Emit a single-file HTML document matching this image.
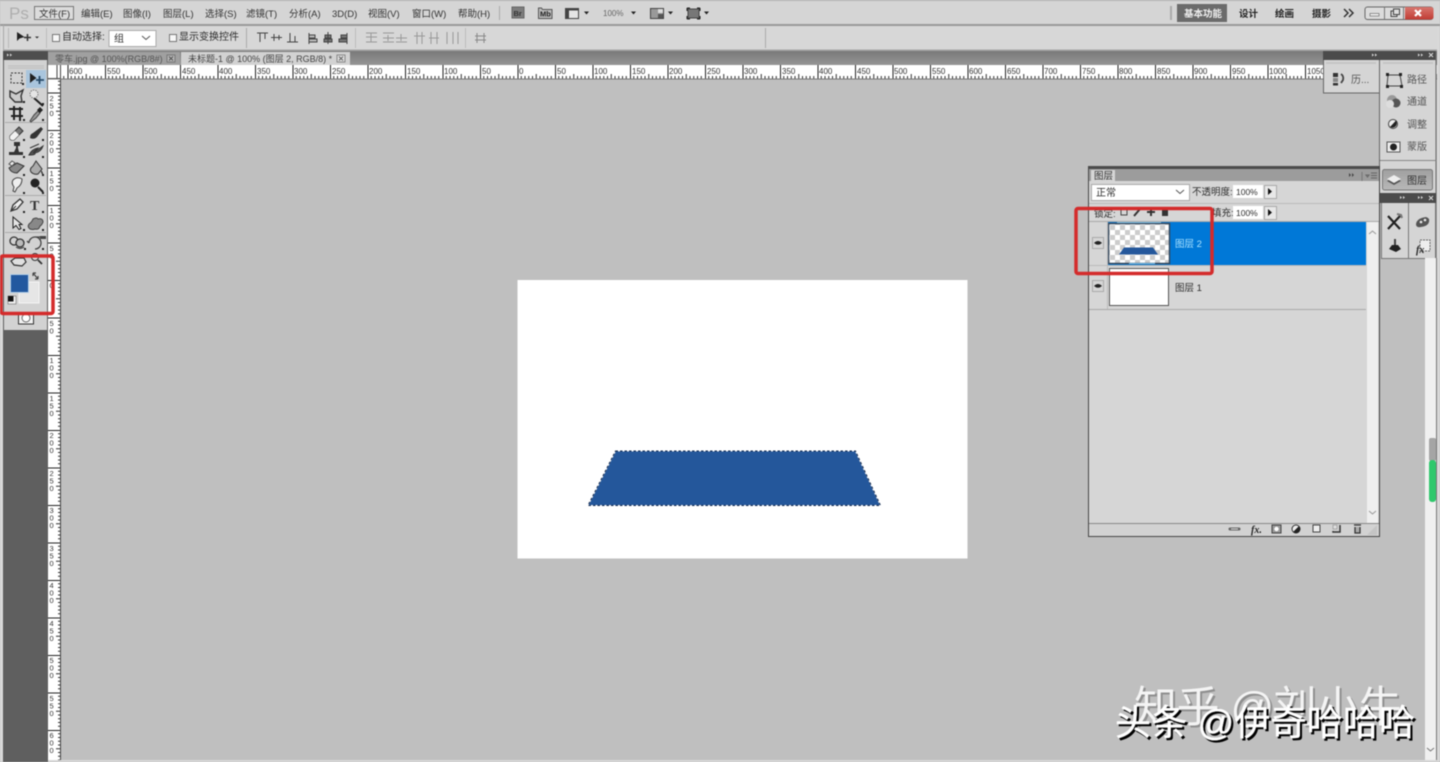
<!DOCTYPE html>
<html lang="zh"><head><meta charset="utf-8"><title>Photoshop</title>
<style>
html,body{margin:0;padding:0;width:1440px;height:762px;overflow:hidden;background:#bfbfbf}
svg{display:block;position:absolute;left:0;top:0;filter:blur(.5px)}
text{font-family:"Liberation Sans","Noto Sans CJK SC",sans-serif;fill:#2e2e2e;font-size:10px}
.m text{font-size:9.5px;fill:#333}
.rh text{font-size:8px;fill:#333}
.rv text{font-size:7.5px;fill:#333}
</style></head><body>
<svg width="1440" height="762" viewBox="0 0 1440 762" xmlns="http://www.w3.org/2000/svg">
<defs>
<pattern id="th" patternUnits="userSpaceOnUse" x="517.5" y="65" width="37.5" height="14">
<rect width="37.5" height="14" fill="#fff"/>
<rect x="0" width="1" height="14" fill="#222"/>
<path d="M3.75 11v3M7.5 11v3M11.25 11v3M15 11v3M18.75 9v5M22.5 11v3M26.25 11v3M30 11v3M33.75 11v3" stroke="#333" stroke-width="1"/>
</pattern>
<pattern id="tv" patternUnits="userSpaceOnUse" x="48" y="280" width="13" height="37.5">
<rect width="13" height="37.5" fill="#fff"/>
<rect y="0" width="13" height="1" fill="#222"/>
<path d="M10 3.75h3M10 7.5h3M10 11.25h3M10 15h3M8 18.75h5M10 22.5h3M10 26.25h3M10 30h3M10 33.75h3" stroke="#333" stroke-width="1"/>
</pattern>
<pattern id="ck" patternUnits="userSpaceOnUse" x="1110" y="225" width="10" height="10">
<rect width="10" height="10" fill="#fff"/><rect width="5" height="5" fill="#ccc"/><rect x="5" y="5" width="5" height="5" fill="#ccc"/>
</pattern>
<linearGradient id="tb" x1="0" y1="0" x2="0" y2="1"><stop offset="0" stop-color="#7a7a7a"/><stop offset="1" stop-color="#959595"/></linearGradient>
<linearGradient id="cl" x1="0" y1="0" x2="0" y2="1"><stop offset="0" stop-color="#d8766e"/><stop offset="1" stop-color="#c03c34"/></linearGradient>
<linearGradient id="btn" x1="0" y1="0" x2="0" y2="1"><stop offset="0" stop-color="#a0a0a0"/><stop offset="1" stop-color="#b8b8b8"/></linearGradient>
</defs>

<!-- base -->
<rect width="1440" height="762" fill="#bfbfbf"/>
<rect x="0" y="0" width="1440" height="25" fill="#d5d5d5"/>
<rect x="0" y="0" width="1440" height="1" fill="#b5b5b5"/>
<rect x="0" y="24" width="1440" height="2" fill="#999"/>
<rect x="0" y="26" width="1440" height="24" fill="#d7d7d7"/>
<rect x="0" y="49.500" width="1440" height="2" fill="#a3a3a3"/>
<rect x="0" y="26" width="3" height="736" fill="#d9d9d9"/>
<rect x="3" y="25" width="1" height="26" fill="#a8a8a8"/>

<!-- menu -->
<text x="9" y="19" style="font-size:17px;fill:#aeaeae;font-family:'Liberation Sans',sans-serif">Ps</text>
<rect x="34.500" y="6.500" width="39" height="13" fill="#dcdcdc" stroke="#777"/>
<g class="m">
<text x="39" y="17">文件(F)</text>
<text x="81" y="17">编辑(E)</text>
<text x="123" y="17">图像(I)</text>
<text x="163" y="17">图层(L)</text>
<text x="205" y="17">选择(S)</text>
<text x="246" y="17">滤镜(T)</text>
<text x="289" y="17">分析(A)</text>
<text x="332" y="17">3D(D)</text>
<text x="368" y="17">视图(V)</text>
<text x="412" y="17">窗口(W)</text>
<text x="458" y="17">帮助(H)</text>
</g>
<rect x="499" y="6" width="1" height="14" fill="#aaa"/>
<rect x="512" y="7" width="12" height="11" fill="#7d7d7d" stroke="#666"/>
<text x="513.500" y="16" style="font-size:7.500px;font-weight:bold;fill:#333">Br</text>
<path d="M538.500 8h3l1 1.500h9.500v9h-13.500z" fill="#bbb" stroke="#555"/>
<text x="540" y="16.500" style="font-size:7.500px;font-weight:bold;fill:#222">Mb</text>
<rect x="565.500" y="8.500" width="13" height="10" fill="#e5e5e5" stroke="#444"/>
<rect x="565" y="8" width="4" height="11" fill="#444"/><rect x="565" y="8" width="14" height="2.500" fill="#444"/>
<path d="M584 11.500h5l-2.500 3z" fill="#222"/>
<text x="603" y="16" style="font-size:8px;fill:#666">100%</text>
<path d="M631 11.500h5l-2.500 3z" fill="#222"/>
<rect x="650.500" y="8.500" width="13" height="10" fill="#999" stroke="#444"/>
<rect x="658" y="9" width="5" height="4" fill="#ddd"/><rect x="658" y="14" width="5" height="4" fill="#555"/>
<path d="M668 11.500h5l-2.500 3z" fill="#222"/>
<rect x="688" y="9" width="11" height="9" fill="#777" stroke="#444"/>
<path d="M687 8h3M687 8v3M700 8h-3M700 8v3M687 19h3M687 19v-3M700 19h-3M700 19v-3" stroke="#222" fill="none"/>
<path d="M704 11.500h5l-2.500 3z" fill="#222"/>

<!-- workspace switcher -->
<rect x="1170" y="6" width="2" height="14" fill="#aaa"/>
<rect x="1177" y="4" width="50" height="18" fill="#6b6b6b"/>
<text x="1184" y="17" style="fill:#f0f0f0;font-weight:bold;font-size:9.500px">基本功能</text>
<text x="1239" y="17" style="fill:#222;font-weight:bold;font-size:9.500px">设计</text>
<text x="1275" y="17" style="fill:#222;font-weight:bold;font-size:9.500px">绘画</text>
<text x="1312" y="17" style="fill:#222;font-weight:bold;font-size:9.500px">摄影</text>
<path d="M1344 9l4 4-4 4M1349 9l4 4-4 4" stroke="#333" stroke-width="1.500" fill="none"/>
<rect x="1365" y="7" width="68" height="12.500" rx="2.500" fill="#dcdcdc" stroke="#666"/>
<path d="M1405 7h26a2.500 2.500 0 0 1 2.500 2.500v7.500a2.500 2.500 0 0 1-2.500 2.500h-26z" fill="url(#cl)"/>
<rect x="1384" y="7" width="1" height="12.500" fill="#777"/><rect x="1403" y="7" width="1" height="12.500" fill="#777"/>
<rect x="1370" y="13.500" width="9" height="2.500" fill="#f3f3f3" stroke="#555" stroke-width=".6"/>
<rect x="1391" y="11" width="6" height="5.500" fill="none" stroke="#444"/><rect x="1393.500" y="9" width="6" height="5.500" fill="#ddd" stroke="#444"/>
<path d="M1415 10l6 6M1421 10l-6 6" stroke="#fff" stroke-width="2.200"/>

<!-- options bar -->
<rect x="8" y="28" width="1" height="20" fill="#b8b8b8"/>
<path d="M17 32v9l2.500-2.500 5-1.500z" fill="#222"/>
<path d="M27.500 34v7M24 37.500h7" stroke="#333" stroke-width="1.500"/>
<path d="M35 36.500h4l-2 2z" fill="#333"/>
<rect x="46" y="28" width="1" height="20" fill="#bbb"/>
<rect x="52.500" y="34.500" width="7" height="7" fill="#f7f7f7" stroke="#777"/>
<text x="62" y="40">自动选择:</text>
<rect x="109" y="30.500" width="47" height="16" fill="#fff" stroke="#aaa"/>
<text x="114" y="42">组</text>
<path d="M142 36l4 3.500 4-3.500" stroke="#555" fill="none"/>
<rect x="169.500" y="34.500" width="7" height="7" fill="#f7f7f7" stroke="#777"/>
<text x="179" y="40">显示变换控件</text>
<rect x="246" y="28" width="1" height="20" fill="#aaa"/>
<g stroke="#444" fill="#666" stroke-width="1">
<path d="M257 33h11M260 33v9M265 33v6" fill="none"/>
<path d="M271 37.500h11M274 34v7M279 35v5" fill="none"/>
<path d="M287 42h11M290 33v9M295 36v6" fill="none"/>
<path d="M309 33v11M309 35h6v3h-6zM309 39h8v3h-8z" fill="#bbb"/>
<path d="M328 32v12M325 35h6v3h-6zM324 39h8v3h-8z" fill="#777"/>
<path d="M347 33v11M341 35h6v3h-6zM339 39h8v3h-8z" fill="#777"/>
</g>
<rect x="355" y="28" width="1" height="20" fill="#bbb"/>
<g stroke="#999" fill="none" stroke-width="1">
<path d="M366 33h11M366 37h11M366 42h11M371 33v9"/>
<path d="M383 33h11M383 38h11M383 42h11M388 35v6"/>
<path d="M396 42h11M396 38h11M401 34v7"/>
<path d="M417 32v12M422 32v12M414 36h11"/>
<path d="M431 32v12M437 32v12M429 38h10"/>
<path d="M447 32v12M453 32v12M458 32v12"/>
</g>
<rect x="465" y="28" width="1" height="20" fill="#bbb"/>
<path d="M477 33v10M484 33v10M475 36h11M475 40h11" stroke="#888" fill="none"/>
<rect x="765" y="28" width="1" height="20" fill="#aaa"/>

<!-- tabs -->
<rect x="3" y="51" width="1437" height="14" fill="url(#tb)"/>
<rect x="3" y="51" width="45" height="9" fill="#4e4e4e"/>
<path d="M7 53.500v3l2-1.500zM10 53.500v3l2-1.500z" fill="#ddd"/>
<rect x="48" y="52" width="132" height="13" fill="#a0a0a0"/>
<text x="55" y="62" style="fill:#555;font-size:9px">零车.jpg @ 100%(RGB/8#)</text>
<rect x="167" y="55" width="8" height="7" fill="#b5b5b5" stroke="#777"/>
<path d="M169 56.500l4 4M173 56.500l-4 4" stroke="#555"/>
<rect x="181" y="52" width="169" height="13" fill="#d2d2d2"/>
<text x="188" y="62" style="fill:#444;font-size:9px">未标题-1 @ 100% (图层 2, RGB/8) *</text>
<rect x="337" y="55" width="8" height="7" fill="#ddd" stroke="#888"/>
<path d="M339 56.500l4 4M343 56.500l-4 4" stroke="#666"/>

<!-- rulers -->
<rect x="48" y="65" width="1392" height="14" fill="url(#th)"/>
<rect x="48" y="79" width="13" height="683" fill="url(#tv)"/>
<rect x="48" y="65" width="13" height="14" fill="#fff"/>
<path d="M60.500 65v697M48 78.500h13M57 65v14" stroke="#444" fill="none"/>
<rect x="48" y="78.500" width="1392" height="1" fill="#777"/>
<g class="rh">
<text x="69" y="74">600</text><text x="107" y="74">550</text><text x="144" y="74">500</text><text x="182" y="74">450</text><text x="219" y="74">400</text><text x="257" y="74">350</text><text x="294" y="74">300</text><text x="332" y="74">250</text><text x="369" y="74">200</text><text x="407" y="74">150</text><text x="444" y="74">100</text><text x="482" y="74">50</text><text x="519" y="74">0</text><text x="557" y="74">50</text><text x="594" y="74">100</text><text x="632" y="74">150</text><text x="669" y="74">200</text><text x="707" y="74">250</text><text x="744" y="74">300</text><text x="782" y="74">350</text><text x="819" y="74">400</text><text x="857" y="74">450</text><text x="894" y="74">500</text><text x="932" y="74">550</text><text x="969" y="74">600</text><text x="1007" y="74">650</text><text x="1044" y="74">700</text><text x="1082" y="74">750</text><text x="1119" y="74">800</text><text x="1157" y="74">850</text><text x="1194" y="74">900</text><text x="1232" y="74">950</text><text x="1269" y="74">1000</text><text x="1307" y="74">1050</text>
</g>
<g class="rv">
<text x="49.500 49.500 49.500" y="101 108.500 116">250</text>
<text x="49.500 49.500 49.500" y="138 145.500 153">200</text>
<text x="49.500 49.500 49.500" y="176 183.500 191">150</text>
<text x="49.500 49.500 49.500" y="213 220.500 228">100</text>
<text x="49.500 49.500" y="251 258.500">50</text>
<text x="49.500" y="288">0</text>
<text x="49.500 49.500" y="326 333.500">50</text>
<text x="49.500 49.500 49.500" y="363 370.500 378">100</text>
<text x="49.500 49.500 49.500" y="401 408.500 416">150</text>
<text x="49.500 49.500 49.500" y="438 445.500 453">200</text>
<text x="49.500 49.500 49.500" y="476 483.500 491">250</text>
<text x="49.500 49.500 49.500" y="513 520.500 528">300</text>
<text x="49.500 49.500 49.500" y="551 558.500 566">350</text>
<text x="49.500 49.500 49.500" y="588 595.500 603">400</text>
<text x="49.500 49.500 49.500" y="626 633.500 641">450</text>
<text x="49.500 49.500 49.500" y="663 670.500 678">500</text>
<text x="49.500 49.500 49.500" y="701 708.500 716">550</text>
<text x="49.500 49.500 49.500" y="738 745.500 753">600</text>
</g>
<rect x="48" y="760" width="1392" height="2" fill="#d8d8d8"/>

<!-- left toolbar -->
<rect x="3" y="60" width="45" height="702" fill="#5f5f5f"/>
<rect x="4" y="60" width="43" height="270" fill="#d2d2d2"/>
<path d="M8 66h36M8 68h36" stroke="#bdbdbd"/>
<path d="M5 122.500h41M5 195.500h41M5 232.500h41" stroke="#aaa"/>
<rect x="26" y="70" width="20" height="18" fill="#a9c5dd"/>
<!-- tool icons -->
<rect x="11" y="73" width="11" height="10" fill="none" stroke="#333" stroke-dasharray="2 1.500"/>
<path d="M30 73v10l3-2.500 3.500-2.500z" fill="#1f1f1f"/><path d="M39.500 76v8M36 80h8" stroke="#274a68" stroke-width="1.800"/>
<path d="M10 91l6 3 7-4-2 6 1 6h-7l-5-5z" fill="#ccc" stroke="#333" stroke-width="1.400"/>
<path d="M34 98l9 8" stroke="#222" stroke-width="2"/><circle cx="34" cy="94" r="4" fill="#e5e5e5" stroke="#777" stroke-dasharray="1.500 1"/>
<path d="M14 106v14M9 109h14v-0M11 116h12M20 107v14" stroke="#222" stroke-width="2" fill="none"/>
<path d="M30 121l4-6 4-4 2 2-4 5-5 4z" fill="#999" stroke="#444"/><path d="M37 110l3-3 3 3-3 3z" fill="#222"/>
<path d="M10 136l9-9 4 4-9 9q-5 1-4-4z" fill="#777" stroke="#333"/><path d="M10 136l5-5 4 4-5 5q-5 1-4-4z" fill="#f2f2f2"/>
<path d="M30 138q0-4 3-5l8-6 2 2-6 8q-3 3-7 1z" fill="#333"/>
<path d="M9 155h14v-3h-4l-1-4v-2h2v-4h-6v4h2v2l-2 4h-5z" fill="#333"/>
<path d="M29 155q3-6 9-7l-5 5 10-7q-2 6-8 7 1 2-6 2zM30 148l9-4" stroke="#333" fill="#555"/>
<path d="M9 168l8-5 7 3-7 7q-6 0-8-5z" fill="#888" stroke="#333"/><path d="M9 164l3-3 3 2-3 3z" fill="#eee" stroke="#555"/>
<path d="M31 172q-2-3 2-6l3-5 6 8-4 5q-4 1-7-2z" fill="#aaa" stroke="#333"/><path d="M41 170q2 2 2 4-2 1-2-4z" fill="#333"/>
<path d="M13 180q4-4 9-1 0 6-5 9l-2 4-2-1 1-4q-3-4-1-7z" fill="#eee" stroke="#444"/>
<circle cx="35" cy="183" r="4.500" fill="#222"/><path d="M38 187l5 5" stroke="#222" stroke-width="2"/>
<path d="M11 211l2-6 7-6 3 3-6 7z" fill="#eee" stroke="#333" stroke-width="1.300"/><path d="M11 211l5-5" stroke="#333"/>
<text x="30" y="210" style="font:bold 14px 'Liberation Serif',serif;fill:#333">T</text>
<path d="M13 217v11l3-2.500 3 4 2-1-2-4h3z" fill="#e5e5e5" stroke="#222"/>
<path d="M29 224q3-2 4-5 4-2 5 0 5-1 5 3-1 3-3 4-1 4-5 3-2 1-5 0-3-2-1-5z" fill="#888" stroke="#444"/>
<circle cx="14" cy="241" r="4" fill="none" stroke="#333" stroke-width="1.300"/><circle cx="20" cy="243" r="4" fill="#bbb" stroke="#333" stroke-width="1.300"/><path d="M16 247q4 3 8 0" stroke="#333" fill="none"/>
<path d="M29 243a6 6 0 1 1 6 6M29 243l-2-2M35 237h7" stroke="#444" fill="none" stroke-width="1.300"/><path d="M40 236h6v3h-6z" fill="#444"/>
<path d="M11 261l4-3h9l2 4-4 4-8-1z" fill="#e0e0e0" stroke="#333" stroke-width="1.200"/>
<circle cx="35" cy="257" r="3.500" fill="#ddd" stroke="#333"/><path d="M38 260l4 4" stroke="#333" stroke-width="1.800"/>
<g fill="#222"><rect x="22" y="83" width="2" height="2"/><rect x="23" y="101" width="2" height="2"/><rect x="23" y="119" width="2" height="2"/><rect x="42" y="103" width="2" height="2"/><rect x="42" y="119" width="2" height="2"/><rect x="23" y="139" width="2" height="2"/><rect x="42" y="139" width="2" height="2"/><rect x="23" y="156" width="2" height="2"/><rect x="42" y="156" width="2" height="2"/><rect x="23" y="174" width="2" height="2"/><rect x="42" y="174" width="2" height="2"/><rect x="23" y="192" width="2" height="2"/><rect x="42" y="192" width="2" height="2"/><rect x="23" y="211" width="2" height="2"/><rect x="42" y="211" width="2" height="2"/><rect x="23" y="229" width="2" height="2"/><rect x="42" y="229" width="2" height="2"/><rect x="24" y="248" width="2" height="2"/><rect x="42" y="248" width="2" height="2"/></g>
<!-- colours -->
<rect x="19" y="282" width="20" height="21" fill="#e6e6e6" stroke="#f4f4f4"/>
<rect x="10.500" y="274.500" width="18" height="18" fill="#22589f" stroke="#b5cfe8"/>
<rect x="8" y="296" width="8" height="8" fill="#f0f0f0" stroke="#555" stroke-width=".5"/>
<rect x="8" y="296" width="5.500" height="5.500" fill="#111"/>
<path d="M33 273l5 6M33 273h3M33 273v3M38 279h-3M38 279v-3" stroke="#444" fill="none" stroke-width="1.200"/>
<rect x="18.500" y="313" width="15" height="11" fill="#f2f2f2" stroke="#333"/>
<circle cx="26" cy="318" r="4" fill="#fff" stroke="#666"/>

<!-- canvas -->
<rect x="517.500" y="280" width="450" height="278.500" fill="#fff"/>
<path d="M615.500 451H855.500L880.500 505.500H588z" fill="#24579b"/>
<path d="M615.500 451H855.500L880.500 505.500H588z" fill="none" stroke="#fff" stroke-width="1"/>
<path d="M615.500 451H855.500L880.500 505.500H588z" fill="none" stroke="#10264a" stroke-width="1" stroke-dasharray="2.500 2"/>

<!-- top-right panels -->
<rect x="1323" y="51" width="113" height="9" fill="#4b4b4b"/>
<path d="M1372 53.500v3l2-1.500zM1375 53.500v3l2-1.500zM1418 53.500v3l2-1.500zM1421 53.500v3l2-1.500z" fill="#ddd"/>
<path d="M1429 53l4 4M1433 53l-4 4" stroke="#ddd"/>
<rect x="1323" y="60" width="57" height="33" fill="#d5d5d5"/>
<path d="M1323.500 60v33h56" stroke="#666" fill="none"/>
<rect x="1380" y="60" width="56" height="133" fill="#d5d5d5"/>
<path d="M1379.500 60v133M1436 51v207" stroke="#666" fill="none"/>
<path d="M1326 63h50M1383 63h50" stroke="#c4c4c4" stroke-width="2"/>
<rect x="1333" y="73" width="5" height="4" fill="#333"/><rect x="1333" y="78" width="5" height="4" fill="#888"/><rect x="1333" y="83" width="5" height="2.500" fill="#333"/>
<path d="M1341 74q3 2 2 6l-2 3" stroke="#444" stroke-width="1.800" fill="none"/>
<text x="1351" y="83" style="fill:#555">历...</text>
<path d="M1388 75h12l2 11h-15z" fill="none" stroke="#444"/>
<g fill="#222"><rect x="1386" y="73" width="3" height="3"/><rect x="1399" y="73" width="3" height="3"/><rect x="1386" y="85" width="3" height="3"/><rect x="1400" y="85" width="3" height="3"/></g>
<text x="1407" y="83" style="fill:#555">路径</text>
<circle cx="1392" cy="100" r="5" fill="#999"/><circle cx="1396" cy="103" r="4.500" fill="#555"/><circle cx="1390" cy="104" r="4" fill="#ddd"/>
<text x="1407" y="105" style="fill:#555">通道</text>
<circle cx="1393" cy="124" r="4.500" fill="#eee" stroke="#444"/><path d="M1396 120.500a4.500 4.500 0 0 1-6 6.500z" fill="#222"/>
<text x="1407" y="128" style="fill:#555">调整</text>
<rect x="1387" y="142" width="13" height="10" fill="#eee" stroke="#555"/><circle cx="1393.500" cy="147" r="3.500" fill="#222"/>
<text x="1407" y="150" style="fill:#555">蒙版</text>
<path d="M1380 160.500h56" stroke="#888"/>
<rect x="1382.500" y="169.500" width="50" height="20.500" rx="2" fill="url(#btn)" stroke="#777"/>
<path d="M1387 181l7-4 7 4-7 4z" fill="#555"/><path d="M1387 179l7-4 7 4-7 4z" fill="#eee"/>
<text x="1407" y="184" style="fill:#333">图层</text>
<rect x="1380" y="193" width="56" height="10" fill="#4b4b4b"/>
<path d="M1400 196v3l2-1.500zM1403 196v3l2-1.500zM1418 196v3l2-1.500zM1421 196v3l2-1.500z" fill="#ddd"/>
<path d="M1429 196l4 4M1433 196l-4 4" stroke="#ddd"/>
<rect x="1382" y="203" width="27" height="55" fill="#d5d5d5"/><rect x="1409" y="203" width="27" height="55" fill="#d5d5d5"/>
<path d="M1381.500 203v55M1408.500 203v55M1435.500 203v55M1381 258.500h55" stroke="#777" fill="none"/>
<path d="M1388 216l12 13M1400 216l-12 13" stroke="#222" stroke-width="2.200"/><path d="M1397 214l4 1 1 3" stroke="#777" fill="none" stroke-width="2"/>
<path d="M1416 224q1-6 10-7 4 1 3 5-1 4-8 5-5 1-5-3z" fill="#555"/><g fill="#eee"><circle cx="1421" cy="222" r="1.300"/><circle cx="1425" cy="220" r="1.300"/></g>
<path d="M1389 249l3-4h6l3 4-5 3z" fill="#222"/><path d="M1395 239v6" stroke="#444" stroke-width="2"/>
<rect x="1420" y="240" width="10" height="11" fill="#eee" stroke="#666" stroke-dasharray="2 1"/>
<text x="1416" y="253" style="font:italic bold 10px 'Liberation Serif',serif;fill:#222">fx</text>

<!-- right strip -->
<rect x="1425" y="258" width="11" height="502" fill="#f0f0f0"/>
<rect x="1436" y="258" width="1" height="502" fill="#777"/>
<rect x="1437" y="26" width="3" height="736" fill="#d8d8d8"/>
<rect x="1429" y="438" width="7" height="23" rx="2" fill="#a5a5a5"/>
<rect x="1429" y="460" width="7" height="42" rx="3" fill="#2fc86c"/>
<path d="M1427 748l3.500 3 3.500-3" stroke="#777" fill="none"/>

<!-- layers panel -->
<rect x="1088" y="166" width="292" height="371" fill="#d6d6d6"/>
<rect x="1088" y="166" width="292" height="3" fill="#4b4b4b"/>
<rect x="1089" y="169" width="290" height="12" fill="#9c9c9c"/>
<rect x="1091" y="170" width="24" height="11" fill="#d6d6d6"/>
<text x="1094" y="179" style="font-size:9.500px">图层</text>
<path d="M1349 173v4l2-2zM1352 173v4l2-2z" fill="#444"/><path d="M1362 172v9" stroke="#777"/>
<path d="M1366 175h3l-1.500 2zM1371 173h6M1371 175.500h6M1371 178h6" stroke="#666" fill="none"/>
<rect x="1091.500" y="184.500" width="98" height="16" fill="#fff" stroke="#aaa"/>
<text x="1096" y="196">正常</text>
<path d="M1176 190l4 3.500 4-3.500" stroke="#555" fill="none"/>
<text x="1192" y="195" style="font-size:9.500px">不透明度:</text>
<rect x="1233" y="185" width="30" height="13" fill="#fff"/>
<text x="1236" y="195" style="font-size:8.500px">100%</text>
<rect x="1264.500" y="185.500" width="12" height="13" fill="#e8e8e8" stroke="#aaa"/>
<path d="M1268 188v7l4-3.500z" fill="#111"/>
<path d="M1089 203.500h290" stroke="#bbb"/>
<text x="1094" y="217" style="font-size:9.500px">锁定:</text>
<rect x="1121" y="209" width="6" height="6" fill="none" stroke="#444"/>
<path d="M1134 216l6-7" stroke="#333" stroke-width="2"/><path d="M1151 208v8M1147 212h8" stroke="#333" stroke-width="2"/>
<rect x="1162" y="210" width="6" height="6" fill="#333"/><path d="M1163 210v-2h4v2" stroke="#333" fill="none"/>
<text x="1212" y="216" style="font-size:9.500px">填充:</text>
<rect x="1233" y="206" width="30" height="13" fill="#fff"/>
<text x="1236" y="216" style="font-size:8.500px">100%</text>
<rect x="1264.500" y="206.500" width="12" height="13" fill="#e8e8e8" stroke="#aaa"/>
<path d="M1268 209v7l4-3.500z" fill="#111"/>
<path d="M1089 221.500h290" stroke="#aaa"/>
<!-- row 1 -->
<rect x="1108" y="222" width="258" height="43" fill="#0078d7"/>
<rect x="1108.500" y="223.500" width="61" height="40" fill="url(#ck)" stroke="#33475c" stroke-width="1.500"/>
<path d="M1124 247.500h29l5 7h-39z" fill="#24579b"/>
<path d="M1117 222.500h44M1129 263.500h26" stroke="#7cc0e8"/>
<text x="1175" y="247" style="fill:#a9e2ff;font-size:9.500px">图层 2</text>
<rect x="1092.500" y="237.500" width="11" height="11" fill="#d6d6d6" stroke="#aaa"/>
<path d="M1094 243q4-4 8 0-4 3.500-8 0z" fill="#222"/>
<path d="M1089 265.500h277" stroke="#bbb"/><path d="M1107.500 222v87" stroke="#bbb"/>
<!-- row 2 -->
<rect x="1109.500" y="268.500" width="59" height="37" fill="#fff" stroke="#555"/>
<text x="1175" y="291" style="font-size:9.500px">图层 1</text>
<rect x="1092.500" y="280.500" width="11" height="11" fill="#d6d6d6" stroke="#aaa"/>
<path d="M1094 286q4-4 8 0-4 3.500-8 0z" fill="#222"/>
<path d="M1089 309.500h277" stroke="#aaa"/>
<!-- scrollbar -->
<rect x="1367" y="222" width="11" height="301" fill="#efefef"/>
<path d="M1369 234l3.500-3 3.500 3M1369 511l3.500 3 3.500-3" stroke="#999" fill="none"/>
<!-- bottom bar -->
<rect x="1089" y="523" width="290" height="13" fill="#d2d2d2"/>
<path d="M1089 523.500h290" stroke="#888"/>
<path d="M1088.500 166v370.500h291V166" stroke="#444" fill="none"/>
<path d="M1230 529h9" stroke="#666" stroke-width="3" stroke-linecap="round"/><path d="M1231 529h7" stroke="#ddd"/>
<text x="1251" y="533" style="font:italic bold 10px 'Liberation Serif',serif;fill:#222">fx.</text>
<rect x="1272" y="525" width="9" height="8" fill="#999" stroke="#444"/><circle cx="1276.500" cy="529" r="2.200" fill="#fff"/>
<circle cx="1296" cy="529" r="4" fill="#eee" stroke="#333"/><path d="M1299 526a4 4 0 0 1-6 6z" fill="#222"/>
<path d="M1313 525h7v7h-7z" fill="#eee" stroke="#444"/>
<path d="M1333 531v1h7v-7" stroke="#333" fill="none" stroke-width="1.500"/><rect x="1333" y="525" width="4" height="4" fill="#ddd" stroke="#777" stroke-width=".5"/>
<path d="M1354 525h7M1355 527v6h5v-6" stroke="#333" fill="#aaa" stroke-width="1.300"/>
<path d="M1367 535l10-10v10z" fill="#c4c4c4"/>

<!-- red marks -->
<rect x="1076" y="208.500" width="136" height="65" rx="2" fill="none" stroke="#d42b2b" stroke-width="3.500"/>
<rect x="1" y="256" width="52" height="57.500" rx="2" fill="none" stroke="#d42b2b" stroke-width="3.500"/>

<!-- watermarks -->
<g>
<text x="1136" y="724" style="font-size:43px;fill:#8f8f8f;letter-spacing:-.5px;font-family:'Liberation Sans','Noto Sans CJK SC',sans-serif">知乎 @刘小牛</text>
<text x="1134" y="722" style="font-size:43px;fill:#f4f4f4;letter-spacing:-.5px;font-family:'Liberation Sans','Noto Sans CJK SC',sans-serif">知乎 @刘小牛</text>
<text x="1117" y="737" style="font-size:36px;fill:#000;stroke:#000;stroke-width:.6px;letter-spacing:.2px;font-family:'Liberation Sans','Noto Sans CJK SC',sans-serif">头条 @伊奇哈哈哈</text>
<text x="1115" y="735" style="font-size:36px;fill:#fff;stroke:#fff;stroke-width:.4px;letter-spacing:.2px;font-family:'Liberation Sans','Noto Sans CJK SC',sans-serif">头条 @伊奇哈哈哈</text>
</g>
</svg>
</body></html>
